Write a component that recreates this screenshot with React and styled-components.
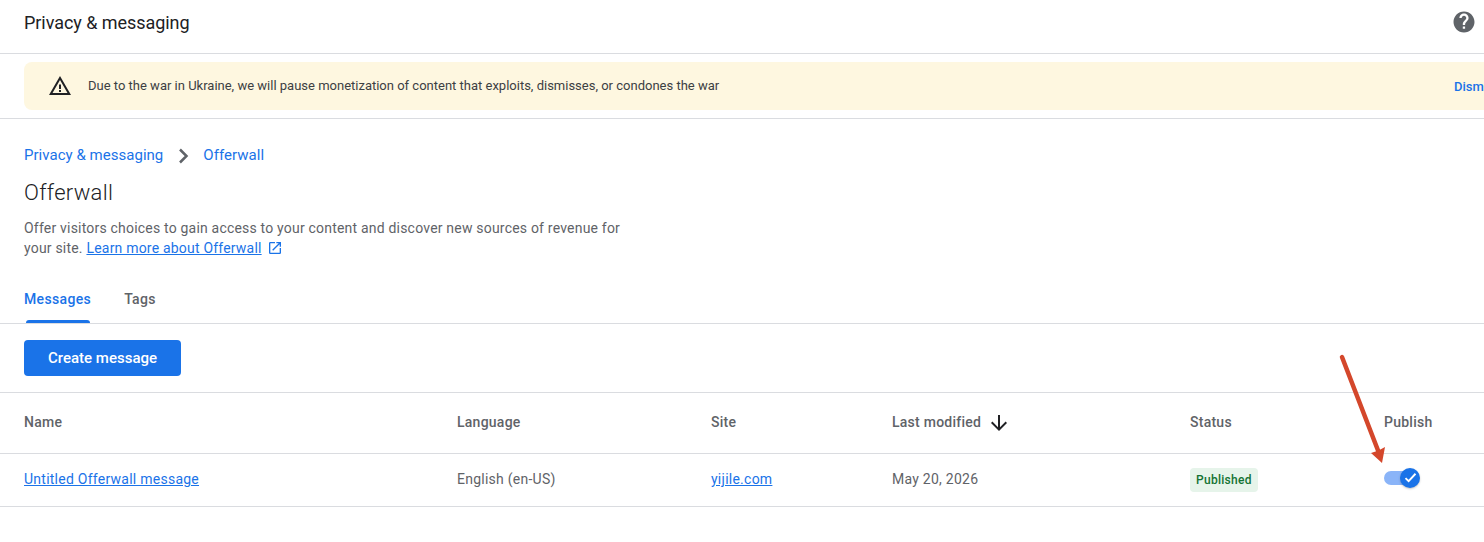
import React from "react";
import styled, { createGlobalStyle } from "styled-components";

const GlobalStyle = createGlobalStyle`
  html, body {
    margin: 0;
    padding: 0;
    background: #fff;
    overflow: hidden;
  }
  body {
    font-family: Roboto, "Liberation Sans", sans-serif;
    color: #3c4043;
  }
`;

const Page = styled.div`
  position: relative;
  width: 1484px;
  height: 542px;
  overflow: hidden;
  background: #fff;
`;

const TopBar = styled.header`
  height: 53px;
  padding: 0 8px 0 24px;
  display: flex;
  align-items: center;
  justify-content: space-between;
  border-bottom: 1px solid #dadce0;
  box-sizing: content-box;
`;

const TopTitle = styled.h1`
  margin: 0 0 8px;
  font-size: 18px;
  font-weight: 400;
  letter-spacing: -0.05px;
  color: #202124;
`;

const HelpIcon = styled.svg`
  width: 24px;
  height: 24px;
  margin: 0 0 10px;
`;

const BannerWrap = styled.div`
  height: 65px;
  padding: 8px 0 0 24px;
  box-sizing: border-box;
  border-bottom: 1px solid #dadce0;
`;

const Banner = styled.div`
  width: 1500px;
  height: 48px;
  padding-left: 24px;
  box-sizing: border-box;
  display: flex;
  align-items: center;
  background: #fef7e0;
  border-radius: 8px 0 0 8px;
`;

const BannerText = styled.span`
  margin: 0 0 2px 16px;
  width: 1366px;
  font-size: 13px;
  color: #3c4043;
`;

const Dismiss = styled.span`
  font-size: 13px;
  font-weight: 500;
  color: #1a73e8;
`;

const Intro = styled.section`
  padding: 27px 24px 0;
`;

const Crumbs = styled.nav`
  display: flex;
  align-items: center;
  height: 20px;
  font-size: 15px;
  letter-spacing: 0.03px;
`;

const Crumb = styled.a`
  margin-top: -2px;
  color: #1a73e8;
`;

const CrumbChevron = styled.svg`
  width: 24px;
  height: 24px;
  margin: 0 8px;
`;

const PageTitle = styled.h2`
  margin: 13px 0 0;
  font-size: 22px;
  line-height: 28px;
  font-weight: 300;
  letter-spacing: 0.3px;
  color: #202124;
`;

const Description = styled.p`
  margin: 11px 0 0;
  width: 610px;
  font-size: 14px;
  line-height: 20px;
  letter-spacing: 0.2px;
  color: #5f6368;
`;

const LearnLink = styled.a`
  color: #1a73e8;
  text-decoration: underline;
`;

const ExternalIcon = styled.svg`
  width: 16px;
  height: 16px;
  margin-left: 5px;
  vertical-align: -3px;
`;

const Tabs = styled.div`
  margin-top: 19px;
  height: 46px;
  padding-left: 24px;
  display: flex;
  gap: 33px;
  border-bottom: 1px solid #dadce0;
`;

const Tab = styled.div`
  position: relative;
  padding-top: 12px;
  font-size: 14px;
  line-height: 20px;
  font-weight: 500;
  letter-spacing: 0.35px;
  color: ${(p) => (p.$active ? "#1a73e8" : "#5f6368")};
  ${(p) =>
    p.$active &&
    `&::after {
      content: "";
      position: absolute;
      left: 2px;
      right: 1px;
      bottom: 0;
      height: 3px;
      background: #1a73e8;
      border-radius: 3px 3px 0 0;
    }`}
`;

const Toolbar = styled.div`
  height: 69px;
  padding: 16px 24px 0;
  box-sizing: border-box;
  border-bottom: 1px solid #dadce0;
`;

const PrimaryButton = styled.button`
  width: 157px;
  height: 36px;
  padding: 0;
  border: 0;
  border-radius: 4px;
  background: #1a73e8;
  color: #fff;
  font-family: inherit;
  font-size: 15px;
  font-weight: 500;
`;

const Row = styled.div`
  display: grid;
  grid-template-columns: 433px 254px 181px 298px 194px 100px;
  align-items: center;
  padding-left: 24px;
  height: ${(p) => p.$height}px;
  border-bottom: 1px solid #dadce0;
  box-sizing: border-box;
`;

const HeadCell = styled.div`
  display: flex;
  align-items: center;
  font-size: 14px;
  font-weight: 500;
  letter-spacing: 0.25px;
  color: #5f6368;
`;

const HeadLabel = styled.span`
  margin-top: -2px;
`;

const SortIcon = styled.svg`
  width: 24px;
  height: 24px;
  margin-left: 6px;
`;

const Cell = styled.div`
  margin-top: -2px;
  font-size: 14px;
  letter-spacing: 0.25px;
  color: #5f6368;
`;

const CellLink = styled.a`
  color: #1a73e8;
  text-decoration: underline;
`;

const StatusChip = styled.div`
  justify-self: start;
  padding: 0 6px;
  height: 24px;
  line-height: 24px;
  border-radius: 4px;
  background: #e6f4ea;
  color: #137333;
  font-size: 12px;
  font-weight: 500;
  letter-spacing: 0.28px;
`;

const Toggle = styled.div`
  position: relative;
  width: 30px;
  height: 14px;
  border-radius: 7px;
  margin-top: -5px;
  background: #8ab4f8;
`;

const Knob = styled.div`
  position: absolute;
  top: -3px;
  right: -6px;
  width: 20px;
  height: 20px;
  border-radius: 50%;
  background: #1a73e8;
  box-shadow: 0 1px 2px rgba(60, 64, 67, 0.3);
  display: flex;
  align-items: center;
  justify-content: center;
`;

const Annotation = styled.svg`
  position: absolute;
  left: 1330px;
  top: 350px;
  width: 70px;
  height: 120px;
`;

const columns = ["Name", "Language", "Site"];

export default function App() {
  return (
    <Page>
      <GlobalStyle />
      <TopBar>
        <TopTitle>Privacy &amp; messaging</TopTitle>
        <HelpIcon viewBox="0 0 24 24">
          <path
            fill="#5f6368"
            d="M12 1.500C6.200 1.500 1.500 6.200 1.500 12S6.200 22.500 12 22.500 22.500 17.800 22.500 12 17.800 1.500 12 1.500zm1.100 17.200h-2.300v-2.300h2.300v2.300zm2.400-8.100-1 1.100c-.9.900-1.400 1.600-1.400 3.200h-2.300v-.6c0-1.200.5-2.300 1.400-3.200l1.400-1.500c.4-.4.7-1 .7-1.600 0-1.200-1-2.300-2.300-2.300S9.700 6.800 9.700 8H7.400c0-2.500 2.100-4.600 4.600-4.600s4.600 2.100 4.600 4.600c0 1-.4 1.900-1.100 2.600z"
          />
        </HelpIcon>
      </TopBar>
      <BannerWrap>
        <Banner>
          <svg width="24" height="24" viewBox="0 0 24 24">
            <path fill="#202124" d="M12 2 1 21h22L12 2zm0 4 7.500 13h-15L12 6zm-1 4.500v4.500h2v-4.500h-2zm0 5.500v2h2v-2h-2z" />
          </svg>
          <BannerText>
            Due to the war in Ukraine, we will pause monetization of content that exploits, dismisses, or condones the war
          </BannerText>
          <Dismiss>Dismiss</Dismiss>
        </Banner>
      </BannerWrap>
      <Intro>
        <Crumbs>
          <Crumb>Privacy &amp; messaging</Crumb>
          <CrumbChevron viewBox="0 0 24 24">
            <path fill="none" stroke="#5f6368" strokeWidth="2.500" d="M9 5.500l6.500 6.500L9 18.500" />
          </CrumbChevron>
          <Crumb>Offerwall</Crumb>
        </Crumbs>
        <PageTitle>Offerwall</PageTitle>
        <Description>
          Offer visitors choices to gain access to your content and discover new sources of revenue for your site.{" "}
          <LearnLink>Learn more about Offerwall</LearnLink>
          <ExternalIcon viewBox="0 0 24 24">
            <path
              fill="#1a73e8"
              d="M19 19H5V5h7V3H5a2 2 0 0 0-2 2v14a2 2 0 0 0 2 2h14a2 2 0 0 0 2-2v-7h-2v7zM14 3v2h3.600l-9.800 9.800 1.400 1.400L19 6.400V10h2V3h-7z"
            />
          </ExternalIcon>
        </Description>
      </Intro>
      <Tabs>
        <Tab $active>Messages</Tab>
        <Tab>Tags</Tab>
      </Tabs>
      <Toolbar>
        <PrimaryButton>Create message</PrimaryButton>
      </Toolbar>
      <Row $height={61}>
        {columns.map((c) => (
          <HeadCell key={c}>
            <HeadLabel>{c}</HeadLabel>
          </HeadCell>
        ))}
        <HeadCell>
          <HeadLabel>Last modified</HeadLabel>
          <SortIcon viewBox="0 0 24 24">
            <path fill="#202124" d="M20 12l-1.400-1.400-5.600 5.600V4h-2v12.200l-5.600-5.600L4 12l8 8 8-8z" />
          </SortIcon>
        </HeadCell>
        <HeadCell>
          <HeadLabel>Status</HeadLabel>
        </HeadCell>
        <HeadCell>
          <HeadLabel>Publish</HeadLabel>
        </HeadCell>
      </Row>
      <Row $height={53}>
        <Cell>
          <CellLink>Untitled Offerwall message</CellLink>
        </Cell>
        <Cell>English (en-US)</Cell>
        <Cell>
          <CellLink>yijile.com</CellLink>
        </Cell>
        <Cell>May 20, 2026</Cell>
        <StatusChip>Published</StatusChip>
        <Toggle>
          <Knob>
            <svg width="15" height="15" viewBox="0 0 24 24">
              <path fill="none" stroke="#fff" strokeWidth="3" d="M4 13l5 5L20 6" />
            </svg>
          </Knob>
        </Toggle>
      </Row>
      <Annotation viewBox="0 0 70 120">
        <path fill="none" stroke="#d4472b" strokeWidth="4.500" strokeLinecap="round" d="M12 7 L49 103" />
        <path fill="#d4472b" d="M52 113 L41 103 L48.500 100.500 L55 97 z" />
      </Annotation>
    </Page>
  );
}
